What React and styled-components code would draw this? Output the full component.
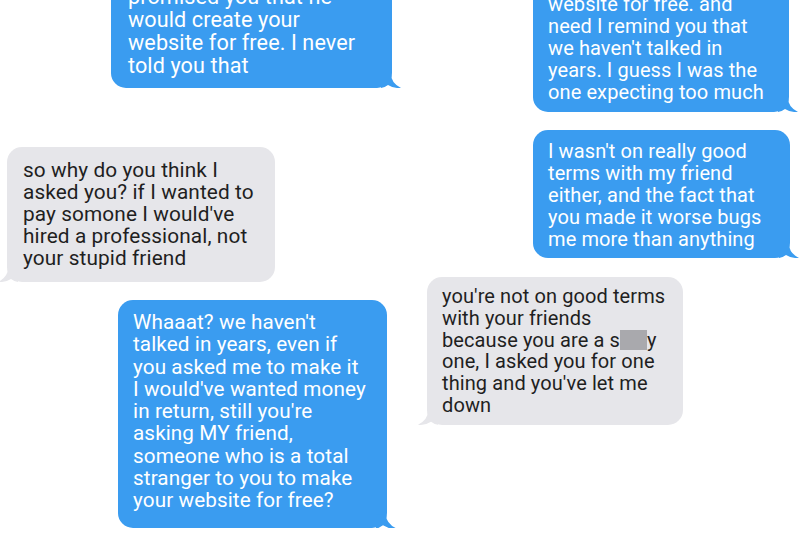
import React from "react";
import styled, { createGlobalStyle, css } from "styled-components";

const GlobalStyle = createGlobalStyle`
  html, body {
    margin: 0;
    padding: 0;
    background: #ffffff;
    overflow: hidden;
  }
  body {
    width: 800px;
    height: 538px;
    font-family: Roboto, "Open Sans", sans-serif;
  }
`;

const Page = styled.div`
  width: 800px;
  height: 538px;
  overflow: hidden;
  display: grid;
  grid-template-columns: 400px 400px;
`;

const Column = styled.div`
  display: flex;
  flex-direction: column;
  align-items: flex-start;
  margin-top: ${(p) => p.$top}px;
`;

const tails = {
  right: css`
    right: -9px;
    clip-path: path("M0 0 L10 0 Q10 9 20 14 Q13 15 7 11 Q3 14 0 14 Z");
  `,
  left: css`
    left: -9px;
    clip-path: path("M20 0 L10 0 Q10 9 0 14 Q7 15 13 11 Q17 14 20 14 Z");
  `,
};

const Bubble = styled.div`
  position: relative;
  box-sizing: border-box;
  width: ${(p) => p.$w}px;
  margin-left: ${(p) => p.$x}px;
  margin-top: ${(p) => p.$gap || 0}px;
  padding: ${(p) => p.$pad || "10px 15px 8px 15px"};
  border-radius: 15px;
  font-size: ${(p) => p.$fs || 20}px;
  line-height: ${(p) => p.$lh || 22}px;
  letter-spacing: 0.1px;
  background: ${(p) => (p.$me ? "#3a9cf0" : "#e6e6ea")};
  color: ${(p) => (p.$me ? "#ffffff" : "#1f1f1f")};

  &::after {
    content: "";
    position: absolute;
    bottom: 0;
    width: 20px;
    height: 14px;
    background: inherit;
    ${(p) => (p.$me ? tails.right : tails.left)}
  }
`;

const Line = styled.div`
  white-space: nowrap;
`;

const Censor = styled.span`
  display: inline-block;
  width: 27px;
  height: 20px;
  vertical-align: -3px;
  background: #a9a9ad;
`;

const Msg = ({ lines, ...rest }) => (
  <Bubble {...rest}>
    {lines.map((l, i) => (
      <Line key={i}>{l}</Line>
    ))}
  </Bubble>
);

export default function App() {
  return (
    <>
      <GlobalStyle />
      <Page>
        <Column $top={-26}>
          <Msg
            $me
            $x={111}
            $w={281}
            $fs={21.6}
            $lh={23}
            $pad="11px 15px 11px 17px"
            lines={[
              "promised you that he",
              "would create your",
              "website for free. I never",
              "told you that",
            ]}
          />
          <Msg
            $x={7}
            $w={268}
            $gap={59}
            $fs={20.8}
            $pad="12px 15px 13px 16px"
            lines={[
              "so why do you think I",
              "asked you? if I wanted to",
              "pay somone I would've",
              "hired a professional, not",
              "your stupid friend",
            ]}
          />
          <Msg
            $me
            $x={118}
            $w={269}
            $gap={18}
            $fs={20.7}
            $lh={22.25}
            $pad="11px 15px 17px 15px"
            lines={[
              "Whaaat? we haven't",
              "talked in years, even if",
              "you asked me to make it",
              "I would've wanted money",
              "in return, still you're",
              "asking MY friend,",
              "someone who is a total",
              "stranger to you to make",
              "your website for free?",
            ]}
          />
        </Column>
        <Column $top={-17}>
          <Msg
            $me
            $x={133}
            $w={256}
            $pad="10px 15px 9px 15px"
            lines={[
              "website for free. and",
              "need I remind you that",
              "we haven't talked in",
              "years. I guess I was the",
              "one expecting too much",
            ]}
          />
          <Msg
            $me
            $x={133}
            $w={257}
            $gap={18}
            $pad="10px 15px 8px 15px"
            lines={[
              "I wasn't on really good",
              "terms with my friend",
              "either, and the fact that",
              "you made it worse bugs",
              "me more than anything",
            ]}
          />
          <Msg
            $x={27}
            $w={256}
            $gap={19}
            $lh={21.8}
            $pad="9px 15px 8px 15px"
            lines={[
              "you're not on good terms",
              "with your friends",
              <>
                because you are a s<Censor />y
              </>,
              "one, I asked you for one",
              "thing and you've let me",
              "down",
            ]}
          />
        </Column>
      </Page>
    </>
  );
}
